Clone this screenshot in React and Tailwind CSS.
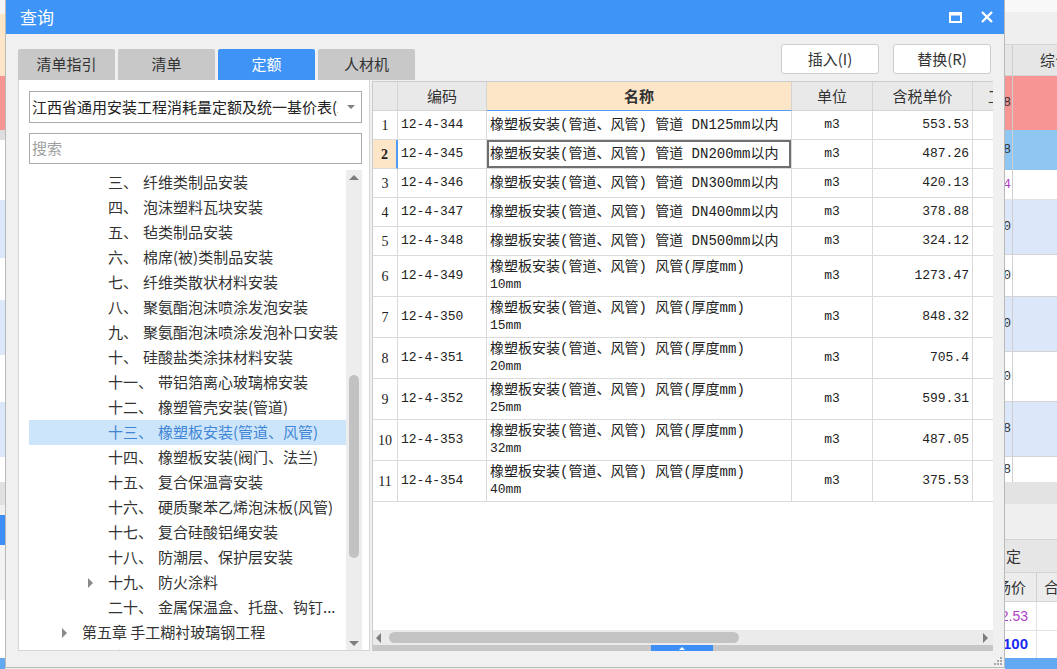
import React from 'react'

const tree = [
  { n: '三、', t: '纤维类制品安装' },
  { n: '四、', t: '泡沫塑料瓦块安装' },
  { n: '五、', t: '毡类制品安装' },
  { n: '六、', t: '棉席(被)类制品安装' },
  { n: '七、', t: '纤维类散状材料安装' },
  { n: '八、', t: '聚氨酯泡沫喷涂发泡安装' },
  { n: '九、', t: '聚氨酯泡沫喷涂发泡补口安装' },
  { n: '十、', t: '硅酸盐类涂抹材料安装' },
  { n: '十一、', t: '带铝箔离心玻璃棉安装' },
  { n: '十二、', t: '橡塑管壳安装(管道)' },
  { n: '十三、', t: '橡塑板安装(管道、风管)', active: true },
  { n: '十四、', t: '橡塑板安装(阀门、法兰)' },
  { n: '十五、', t: '复合保温膏安装' },
  { n: '十六、', t: '硬质聚苯乙烯泡沫板(风管)' },
  { n: '十七、', t: '复合硅酸铝绳安装' },
  { n: '十八、', t: '防潮层、保护层安装' },
  { n: '十九、', t: '防火涂料', arrow: true },
  { n: '二十、', t: '金属保温盒、托盘、钩钉...' },
]

const rows = [
  ['1', '12-4-344', '橡塑板安装(管道、风管) 管道 DN125mm以内', '', '553.53'],
  ['2', '12-4-345', '橡塑板安装(管道、风管) 管道 DN200mm以内', '', '487.26'],
  ['3', '12-4-346', '橡塑板安装(管道、风管) 管道 DN300mm以内', '', '420.13'],
  ['4', '12-4-347', '橡塑板安装(管道、风管) 管道 DN400mm以内', '', '378.88'],
  ['5', '12-4-348', '橡塑板安装(管道、风管) 管道 DN500mm以内', '', '324.12'],
  ['6', '12-4-349', '橡塑板安装(管道、风管) 风管(厚度mm)', '10mm', '1273.47'],
  ['7', '12-4-350', '橡塑板安装(管道、风管) 风管(厚度mm)', '15mm', '848.32'],
  ['8', '12-4-351', '橡塑板安装(管道、风管) 风管(厚度mm)', '20mm', '705.4'],
  ['9', '12-4-352', '橡塑板安装(管道、风管) 风管(厚度mm)', '25mm', '599.31'],
  ['10', '12-4-353', '橡塑板安装(管道、风管) 风管(厚度mm)', '32mm', '487.05'],
  ['11', '12-4-354', '橡塑板安装(管道、风管) 风管(厚度mm)', '40mm', '375.53'],
]

const LeftStrip = () => (
  <div className="w-[5px] shrink-0 flex flex-col">
    <div className="h-[14px] bg-[#f5f5f5]" />
    <div className="h-[62px] bg-[#fde6c8]" />
    <div className="h-[54px] bg-[#f79595]" />
    <div className="h-[10px] bg-[#dedede]" />
    <div className="h-[30px] bg-white" />
    <div className="h-[30px] bg-white" />
    <div className="h-[58px] bg-[#dce8fa]" />
    <div className="h-[42px] bg-white" />
    <div className="h-[55px] bg-[#dce8fa]" />
    <div className="h-[47px] bg-white" />
    <div className="h-[55px] bg-[#dce8fa]" />
    <div className="h-[25px] bg-white" />
    <div className="h-[23px] bg-[#e0e0e0]" />
    <div className="h-[10px] bg-[#f0f0f0]" />
    <div className="h-[30px] bg-[#3d8ef5]" />
    <div className="h-[55px] bg-[#f2f2f2]" />
    <div className="h-[30px] bg-white" />
    <div className="h-[28px] bg-white" />
    <div className="h-[11px] bg-[#62a9f2]" />
  </div>
)

const Cut = ({ children, className }) => (
  <div className={`w-[8px] shrink-0 overflow-hidden flex justify-end items-center border-r border-[#cfcfcf] pr-[1px] font-['Liberation_Mono',monospace] text-[13px] ${className}`}>
    <span className="whitespace-nowrap">{children}</span>
  </div>
)

const RightStrip = () => (
  <div className="w-[52px] shrink-0 flex flex-col text-[#333] text-[15px]">
    <div className="h-[12px] bg-[#f8f8f8]" />
    <div className="h-[33px] bg-[#efefef] border-b border-[#d4d4d4]" />
    <div className="h-[31px] bg-[#e6e6e6] flex border-b border-[#d4d4d4]">
      <Cut />
      <div className="pl-[27px] flex items-center whitespace-nowrap">综合单价</div>
    </div>
    <div className="h-[54px] bg-[#f79595] flex"><Cut>3.38</Cut></div>
    <div className="h-[40px] bg-[#90c6f2] flex"><Cut>3.38</Cut></div>
    <div className="h-[30px] bg-white flex border-b border-[#e2e2e2]"><Cut className="text-[#b040c8]">1.34</Cut></div>
    <div className="h-[55px] bg-[#dce8fa] flex border-b border-[#d4d4d4]"><Cut>1.50</Cut></div>
    <div className="h-[42px] bg-white flex border-b border-[#d4d4d4]"><Cut>1.50</Cut></div>
    <div className="h-[55px] bg-[#dce8fa] flex border-b border-[#d4d4d4]"><Cut>1.50</Cut></div>
    <div className="h-[50px] bg-white flex border-b border-[#d4d4d4]"><Cut>1.50</Cut></div>
    <div className="h-[55px] bg-[#dce8fa] flex border-b border-[#d4d4d4]"><Cut>3.38</Cut></div>
    <div className="h-[25px] bg-white flex"><Cut>3.38</Cut></div>
    <div className="h-[22px] bg-[#e3e3e3]" />
    <div className="h-[36px] bg-[#efefef] border-b border-[#d4d4d4]" />
    <div className="h-[33px] bg-[#e6e6e6] flex items-center pl-[1px] border-b border-[#d4d4d4]">定</div>
    <div className="h-[29px] bg-[#ececec] flex border-b border-[#d4d4d4]">
      <div className="w-[32px] shrink-0 overflow-hidden flex justify-end items-center border-r border-[#cfcfcf] pr-[10px] whitespace-nowrap">市场价</div>
      <div className="pl-[7px] flex items-center whitespace-nowrap">合价</div>
    </div>
    <div className="h-[29px] bg-white flex border-b border-[#e2e2e2]">
      <div className="w-[32px] shrink-0 overflow-hidden flex justify-end items-center border-r border-[#e2e2e2] pr-[8px] whitespace-nowrap font-['Liberation_Sans',sans-serif] text-[14px] text-[#b040c8]">512.53</div>
    </div>
    <div className="h-[27px] bg-white flex">
      <div className="w-[32px] shrink-0 overflow-hidden flex justify-end items-center border-r border-[#e2e2e2] pr-[8px] whitespace-nowrap font-['Liberation_Sans',sans-serif] text-[15px] font-bold text-[#1a2cf0]">100</div>
    </div>
    <div className="h-[11px] bg-[#62a9f2]" />
  </div>
)

const TreeRow = ({ n, t, active, arrow }) => (
  <div className={`h-[25px] flex items-center whitespace-nowrap ${active ? 'bg-[#cde5fa] text-[#3f86d6]' : 'text-[#333]'}`}>
    <div className="w-[79px] shrink-0 flex items-center">
      {arrow && <div className="ml-[59px] w-0 h-0 border-y-[5px] border-y-transparent border-l-[5px] border-l-[#8a8a8a]" />}
    </div>
    <span>{n}</span>
    <span className="ml-[5px]">{t}</span>
  </div>
)

const Tree = () => (
  <div className="flex-1 flex overflow-hidden">
    <div className="w-[317px] overflow-hidden text-[15px]">
      {tree.map((it) => (
        <TreeRow key={it.n} {...it} />
      ))}
      <div className="h-[25px] flex items-center whitespace-nowrap text-[#333]">
        <div className="w-[53px] shrink-0 flex items-center">
          <div className="ml-[33px] w-0 h-0 border-y-[5px] border-y-transparent border-l-[5px] border-l-[#8a8a8a]" />
        </div>
        <span>第五章 手工糊衬玻璃钢工程</span>
      </div>
      <div className="h-[25px] flex items-center whitespace-nowrap text-[#333]">
        <div className="w-[53px] shrink-0" />
        <span>第六章 橡胶板及塑料板衬里工程</span>
      </div>
    </div>
    <div className="w-[16px] bg-[#ededed] flex flex-col items-center">
      <div className="h-[14px] flex items-center">
        <div className="w-0 h-0 border-x-[5px] border-x-transparent border-b-[5px] border-b-[#7d7d7d]" />
      </div>
      <div className="h-[191px]" />
      <div className="w-[10px] h-[183px] rounded-full bg-[#c2c2c2]" />
      <div className="flex-1" />
      <div className="h-[14px] flex items-center">
        <div className="w-0 h-0 border-x-[5px] border-x-transparent border-t-[5px] border-t-[#7d7d7d]" />
      </div>
    </div>
  </div>
)

const cols = 'grid grid-cols-[25px_89px_305px_81px_100px_20px]'

const Table = () => (
  <div className="h-[570px] flex flex-col border-l border-t border-[#cccccc] bg-white">
    <div className={`${cols} h-[29px] text-[15px] text-[#333]`}>
      <div className="bg-[#e9e9e9] border-r border-b border-[#d4d4d4]" />
      <div className="bg-[#e9e9e9] border-r border-b border-[#d4d4d4] flex items-center justify-center">编码</div>
      <div className="bg-[#fde6c8] border-r border-r-[#d4d4d4] border-b border-b-[#4d9df5] flex items-center justify-center font-bold">名称</div>
      <div className="bg-[#e9e9e9] border-r border-b border-[#d4d4d4] flex items-center justify-center">单位</div>
      <div className="bg-[#e9e9e9] border-r border-b border-[#d4d4d4] flex items-center justify-center">含税单价</div>
      <div className="bg-[#e9e9e9] border-b border-[#d4d4d4] overflow-hidden flex items-center pl-[15px] whitespace-nowrap">工料</div>
    </div>
    {rows.map(([no, code, name, sub, price]) => {
      const sel = no === '2'
      return (
        <div key={no} className={`${cols} ${sub ? 'h-[41px]' : 'h-[29px]'} text-[#222]`}>
          <div className={`border-b border-[#dadada] border-r flex items-center justify-center font-['Liberation_Serif',serif] text-[14px] ${sel ? 'bg-[#fde6c8] font-bold border-r-[#4d9df5] border-r-2' : 'border-r-[#dadada]'}`}>{no}</div>
          <div className="border-r border-b border-[#dadada] flex items-center pl-[3px] font-['Liberation_Mono',monospace] text-[13px]">{code}</div>
          <div className={`border-r border-b border-[#dadada] pl-[3px] font-['Liberation_Mono','Noto_Sans_CJK_SC',monospace] text-[14px] whitespace-nowrap overflow-hidden ${sub ? 'pt-[2px] leading-[18px]' : 'flex items-center'} ${sel ? 'shadow-[inset_0_0_0_2px_#6f6f6f]' : ''}`}>
            {sub ? (
              <>
                <div>{name}</div>
                <div className="text-[13px]">{sub}</div>
              </>
            ) : (
              name
            )}
          </div>
          <div className="border-r border-b border-[#dadada] flex items-center justify-center font-['Liberation_Mono',monospace] text-[13px]">m3</div>
          <div className="border-r border-b border-[#dadada] flex items-center justify-end pr-[3px] font-['Liberation_Mono',monospace] text-[13px]">{price}</div>
          <div className="border-b border-[#dadada]" />
        </div>
      )
    })}
    <div className="flex-1" />
    <div className="h-[15px] bg-[#ebebeb] flex items-center">
      <div className="ml-[3px] w-0 h-0 border-y-[5px] border-y-transparent border-r-[5px] border-r-[#7d7d7d]" />
      <div className="ml-[8px] w-[350px] h-[11px] rounded-full bg-[#c3c3c3]" />
      <div className="flex-1" />
      <div className="mr-[5px] w-0 h-0 border-y-[5px] border-y-transparent border-l-[5px] border-l-[#7d7d7d]" />
    </div>
    <div className="h-[6px] bg-[#c7c7c7] flex">
      <div className="ml-[278px] w-[62px] h-full bg-[#3d8ef5] flex items-center justify-center">
        <div className="w-0 h-0 border-x-[3px] border-x-transparent border-b-[3px] border-b-white" />
      </div>
    </div>
  </div>
)

export default function App() {
  return (
    <div className="w-[1057px] h-[669px] overflow-hidden flex bg-[#f0f0f0] font-['Noto_Sans_CJK_SC',sans-serif]">
      <LeftStrip />
      <div className="w-[1000px] h-[668px] shrink-0 flex flex-col border-x border-b border-[#b9b9b9] bg-[#f0f0f0]">
        {/* title bar */}
        <div className="h-[34px] bg-[#3f95f7] flex items-center pl-[14px] pr-[11px] text-white">
          <span className="text-[17px]">查询</span>
          <div className="ml-auto flex items-center gap-[19px]">
            <svg width="13" height="11" viewBox="0 0 13 11">
              <rect x="1" y="1.5" width="11" height="8.5" fill="none" stroke="white" strokeWidth="2" />
              <rect x="0" y="0" width="13" height="3.5" fill="white" />
            </svg>
            <svg width="12" height="12" viewBox="0 0 12 12">
              <path d="M1 1L11 11M11 1L1 11" stroke="white" strokeWidth="2.4" />
            </svg>
          </div>
        </div>

        <div className="flex-1 flex flex-col">
          <div className="flex gap-[2px] pl-[12px]">
            {/* left column */}
            <div className="w-[352px] flex flex-col">
              <div className="flex gap-[3px] mt-[15px] h-[31px] w-[400px] text-[15px]">
                <div className="w-[97px] rounded-t-[2px] bg-[#c8c8c8] text-[#333] flex items-center justify-center">清单指引</div>
                <div className="w-[97px] rounded-t-[2px] bg-[#c8c8c8] text-[#333] flex items-center justify-center">清单</div>
                <div className="w-[97px] rounded-t-[2px] bg-[#3f93f6] text-white flex items-center justify-center">定额</div>
                <div className="w-[97px] rounded-t-[2px] bg-[#c8c8c8] text-[#333] flex items-center justify-center">人材机</div>
              </div>
              <div className="h-[571px] bg-white border-x border-b border-[#d6d6d6] pl-[10px] pr-[7px] pt-[11px] flex flex-col">
                <div className="h-[32px] border border-[#ababab] flex items-center pl-[2px]">
                  <span className="w-[306px] overflow-hidden whitespace-nowrap text-[15px] text-[#222]">江西省通用安装工程消耗量定额及统一基价表(2017)</span>
                  <div className="ml-auto mr-[6px] w-0 h-0 border-x-[4px] border-x-transparent border-t-[4px] border-t-[#808080]" />
                </div>
                <div className="mt-[10px] h-[31px] border border-[#ababab] flex items-center pl-[2px] text-[15px] text-[#a0a0a0]">搜索</div>
                <div className="mt-[6px] flex-1 flex overflow-hidden">
                  <Tree />
                </div>
              </div>
            </div>

            {/* right column */}
            <div className="w-[621px] flex flex-col">
              <div className="h-[47px] flex justify-end gap-[14px] pt-[10px] pr-[2px]">
                <div className="w-[98px] h-[30px] bg-white border border-[#cdcdcd] rounded-[3px] flex items-center justify-center text-[15px] text-[#333]">插入(I)</div>
                <div className="w-[98px] h-[30px] bg-white border border-[#cdcdcd] rounded-[3px] flex items-center justify-center text-[15px] text-[#333]">替换(R)</div>
              </div>
              <Table />
            </div>
          </div>
          <div className="flex-1 flex justify-end items-end pr-[2px] pb-[2px]">
            <svg width="10" height="10" viewBox="0 0 10 10">
              <rect x="8" y="2" width="2" height="2" fill="#a8a8a8" />
              <rect x="5" y="5" width="2" height="2" fill="#a8a8a8" />
              <rect x="8" y="5" width="2" height="2" fill="#a8a8a8" />
              <rect x="2" y="8" width="2" height="2" fill="#a8a8a8" />
              <rect x="5" y="8" width="2" height="2" fill="#a8a8a8" />
              <rect x="8" y="8" width="2" height="2" fill="#a8a8a8" />
            </svg>
          </div>
        </div>
      </div>
      <RightStrip />
    </div>
  )
}
